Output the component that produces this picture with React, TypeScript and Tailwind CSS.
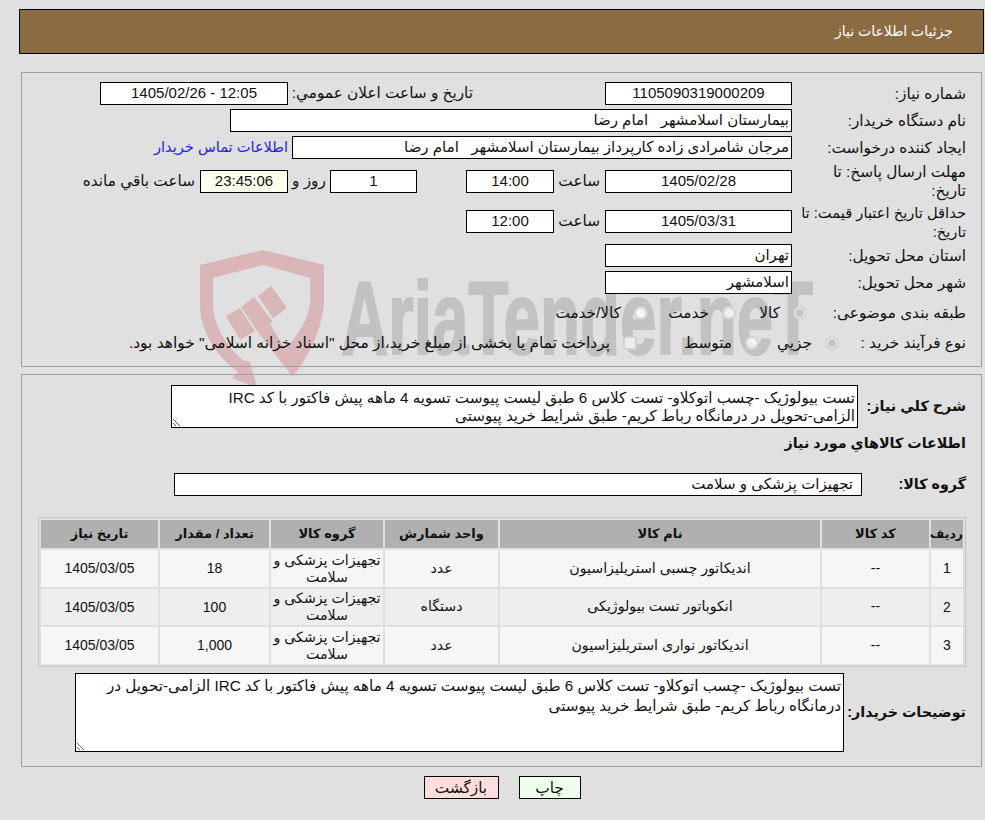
const desc =
  "تست بیولوژیک -چسب اتوکلاو- تست کلاس 6 طبق لیست پیوست تسویه 4 ماهه پیش فاکتور با کد IRC الزامی-\u2060تحویل در درمانگاه رباط کریم- طبق شرایط خرید پیوستی"

const items = [
  { id: "1", name: "انديكاتور چسبی استريليزاسيون", unit: "عدد", qty: "18" },
  { id: "2", name: "انکوباتور تست بيولوژيکی", unit: "دستگاه", qty: "100" },
  { id: "3", name: "انديكاتور نواری استريليزاسيون", unit: "عدد", qty: "1,000" },
]

function Field({ className, bg = "bg-white", children }: { className: string; bg?: string; children?: React.ReactNode }) {
  return (
    <div className={"flex h-[23px] shrink-0 items-center whitespace-pre border border-black px-[2px] text-[15px] " + bg + " " + className}>
      {children}
    </div>
  )
}

function Label({ className = "", children }: { className?: string; children: React.ReactNode }) {
  return <div className={"ml-[6px] w-[169px] shrink-0 whitespace-nowrap pr-[1px] leading-[19px] " + className}>{children}</div>
}

function Option({ className, checked, square, children }: { className: string; checked?: boolean; square?: boolean; children: React.ReactNode }) {
  return (
    <div className={"flex shrink-0 items-center gap-[13px] whitespace-nowrap " + className}>
      <span className={"flex h-[14px] w-[14px] shrink-0 items-center justify-center border-2 border-[#d2d2d2] bg-white/70 " + (square ? "rounded-[3px]" : "rounded-full")}>
        {checked && <span className="h-[8px] w-[8px] rounded-full bg-[#c4c4c4]" />}
      </span>
      <span>{children}</span>
    </div>
  )
}

function Watermark() {
  return (
    <div className="pointer-events-none absolute inset-0 overflow-hidden">
      <svg className="absolute left-0 top-0" width="985" height="420" viewBox="0 0 985 420" fill="#d9b7b9">
        <path d="M263 250 L324 265 L324 305 C320 335 308 357 293 376 L283 352 C298 335 310 318 310 300 L310 278 L263 265 L213 278 L213 305 C214 325 225 345 243 360 L250 362 L257 388 L232 378 L238 372 C215 355 200 330 200 305 L200 265 Z" />
        <path d="M226 316 L240 308 L255 331 L240 340 Z" />
        <path d="M241 307 L254 297 L273 322 L258 332 Z" />
        <path d="M258 296 L271 286 L287 308 L273 318 Z" />
        <path d="M258 332 L270 324 L298 370 L292 376 Z" />
      </svg>
      <div className="absolute left-[341px] top-[266px] origin-left scale-x-[0.63] whitespace-nowrap text-[104px] font-bold leading-none text-[#c2c2c2] [-webkit-text-stroke:2px_#c2c2c2]" dir="ltr">
        AriaTender.neT
      </div>
    </div>
  )
}

export default function App() {
  return (
    <div dir="rtl" className="relative h-[820px] overflow-hidden bg-[#e0e0e0] text-[15.3px] text-[#111] [font-family:'Liberation_Sans','DejaVu_Sans',sans-serif]">
      <Watermark />
      <div className="relative z-10 flex flex-col pt-[9px] pl-[19px] pr-[1px]">
        <div className="flex h-[45px] items-center border border-black bg-[#8b6c42] pr-[30px] text-[14px] text-white">جزئیات اطلاعات نیاز</div>

        <div className="mt-[18px] ml-[2px] mr-[2px] flex h-[295px] flex-col gap-[4px] border border-[#a0a0a0] pt-[9px] pr-[14px]">
          <div className="flex h-[23px] items-center">
            <Label>شماره نياز:</Label>
            <Field className="w-[187px] justify-center">1105090319000209</Field>
            <div className="mr-[132px] w-[180px] shrink-0 whitespace-nowrap">تاريخ و ساعت اعلان عمومي:</div>
            <Field className="mr-[5px] w-[188px] justify-center">12:05 - 1405/02/26</Field>
          </div>
          <div className="flex h-[23px] items-center">
            <Label>نام دستگاه خريدار:</Label>
            <Field className="w-[562px]">بيمارستان اسلامشهر   امام رضا</Field>
          </div>
          <div className="flex h-[23px] items-center">
            <Label>ايجاد كننده درخواست:</Label>
            <Field className="w-[500px]">مرجان شامرادی زاده كارپرداز بيمارستان اسلامشهر   امام رضا</Field>
            <a className="mr-[4px] whitespace-nowrap text-[14.6px] text-[#2222ee]">اطلاعات تماس خريدار</a>
          </div>
          <div className="flex h-[36px] items-center">
            <Label>مهلت ارسال پاسخ: تا<br />تاريخ:</Label>
            <Field className="w-[187px] justify-center">1405/02/28</Field>
            <div className="mr-[5px] w-[46px] shrink-0">ساعت</div>
            <Field className="w-[88px] justify-center">14:00</Field>
            <Field className="mr-[49px] w-[87px] justify-center">1</Field>
            <div className="w-[42px] shrink-0 text-center">روز و</div>
            <Field className="w-[88px] justify-center" bg="bg-[#ffffee]">23:45:06</Field>
            <div className="mr-[5px] whitespace-nowrap">ساعت باقي مانده</div>
          </div>
          <div className="flex h-[36px] items-center">
            <Label className="pt-[4px] text-[14.7px]">حداقل تاريخ اعتبار قيمت: تا<br />تاريخ:</Label>
            <Field className="w-[187px] justify-center">1405/03/31</Field>
            <div className="mr-[5px] w-[46px] shrink-0">ساعت</div>
            <Field className="w-[88px] justify-center">12:00</Field>
          </div>
          <div className="mt-[1px] flex h-[23px] items-center">
            <Label>استان محل تحويل:</Label>
            <Field className="w-[187px]">تهران</Field>
          </div>
          <div className="flex h-[23px] items-center">
            <Label>شهر محل تحويل:</Label>
            <Field className="w-[187px]">اسلامشهر</Field>
          </div>
          <div className="mt-[2px] flex h-[26px] items-center">
            <div className="w-[160px] shrink-0 pr-[1px]">طبقه بندی موضوعی:</div>
            <Option className="w-[71px]" checked>كالا</Option>
            <Option className="w-[88px]">خدمت</Option>
            <Option className="w-[100px]">كالا/خدمت</Option>
          </div>
          <div className="flex h-[26px] items-center">
            <div className="w-[128px] shrink-0 pr-[1px]">نوع فرآيند خريد :</div>
            <Option className="w-[80px]" checked>جزيي</Option>
            <Option className="w-[122px]">متوسط</Option>
            <Option className="w-[300px] text-[15.45px]" square>پرداخت تمام يا بخشی از مبلغ خريد،از محل "اسناد خزانه اسلامی" خواهد بود.</Option>
          </div>
        </div>

        <div className="mt-[7px] ml-[2px] mr-[2px] flex h-[393px] flex-col border border-[#a0a0a0] pr-[15px]">
          <div className="mt-[10px] flex items-center">
            <div className="ml-[5px] w-[103px] shrink-0 whitespace-nowrap text-[14.3px] font-bold">شرح كلي نياز:</div>
            <textarea readOnly value={desc} className="h-[43px] w-[687px] border border-black bg-white px-[2px] pt-[3px] text-[15.2px] leading-[18px]" />
          </div>
          <div className="mt-[4px] text-[14.3px] font-bold leading-[22px]">اطلاعات كالاهاي مورد نياز</div>
          <div className="mt-[19px] flex items-center">
            <div className="ml-[40px] w-[64px] shrink-0 whitespace-nowrap text-[14.3px] font-bold">گروه كالا:</div>
            <Field className="w-[688px] pr-[8px]">تجهيزات پزشكی و سلامت</Field>
          </div>
          <table className="mt-[21px] ml-[1px] w-[928px] table-fixed border-separate border-spacing-[2px] border border-[#c4c4c4] text-center text-[14.2px]">
            <colgroup>
              <col className="w-[32px]" />
              <col className="w-[107px]" />
              <col className="w-[320px]" />
              <col className="w-[113px]" />
              <col className="w-[112px]" />
              <col className="w-[109px]" />
              <col className="w-[117px]" />
            </colgroup>
            <thead>
              <tr className="h-[28px] bg-[#b0b0b0] text-[13px] font-bold">
                <th className="p-0 text-[12.5px]">رديف</th>
                <th className="p-0">كد كالا</th>
                <th className="p-0">نام كالا</th>
                <th className="p-0">واحد شمارش</th>
                <th className="p-0">گروه كالا</th>
                <th className="p-0">تعداد / مقدار</th>
                <th className="p-0">تاريخ نياز</th>
              </tr>
            </thead>
            <tbody>
              {items.map((it, i) => (
                <tr key={it.id} className={i % 2 === 1 ? "h-[36px] bg-[#eeeeee]" : "h-[37px] bg-[#f6f6f6]"}>
                  <td className="p-0 text-[14px]">{it.id}</td>
                  <td className="p-0">--</td>
                  <td className="p-0">{it.name}</td>
                  <td className="p-0">{it.unit}</td>
                  <td className="p-0 leading-[17px]">تجهيزات پزشكی و سلامت</td>
                  <td className="p-0 text-[14px]">{it.qty}</td>
                  <td className="p-0 text-[14px]">1405/03/05</td>
                </tr>
              ))}
            </tbody>
          </table>
          <div className="mt-[6px] flex items-center">
            <div className="ml-[5px] w-[117px] shrink-0 whitespace-nowrap text-[14.3px] font-bold">توضیحات خریدار:</div>
            <textarea readOnly value={desc} className="h-[79px] w-[769px] border border-black bg-white px-[2px] pt-[2px] text-[15.2px] leading-[20px]" />
          </div>
        </div>

        <div className="mt-[9px] flex justify-center gap-[20px] pl-[1px]">
          <button className="h-[23px] w-[62px] border border-black bg-[#eeffee]">چاپ</button>
          <button className="h-[23px] w-[75px] border border-black bg-[#ffdddd]">بازگشت</button>
        </div>
      </div>
    </div>
  )
}
